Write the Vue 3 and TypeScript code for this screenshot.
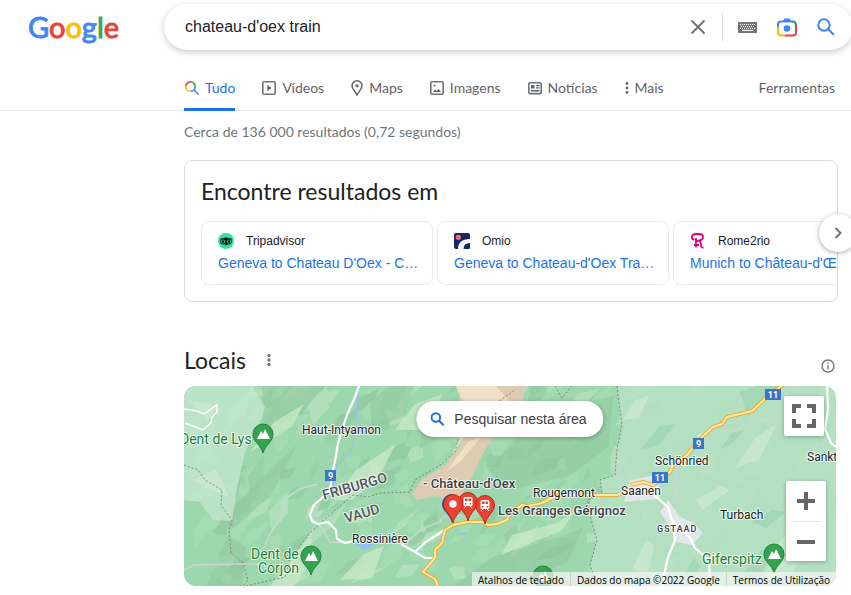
<script setup lang="ts">
import { ref } from 'vue'

interface Facet { points: string; fill: string }
interface Label { text: string; x: number; y: number; kind: string; rotate?: number }

const query = ref("chateau-d'oex train")

const logo = [
  { ch: 'G', tone: 'blue' }, { ch: 'o', tone: 'red' }, { ch: 'o', tone: 'yellow' },
  { ch: 'g', tone: 'blue' }, { ch: 'l', tone: 'green' }, { ch: 'e', tone: 'red' },
]

const tabs = [
  { id: 'all', label: 'Tudo' }, { id: 'videos', label: 'Vídeos' }, { id: 'maps', label: 'Maps' },
  { id: 'images', label: 'Imagens' }, { id: 'news', label: 'Notícias' }, { id: 'more', label: 'Mais' },
]

const sources = [
  { id: 'tripadvisor', name: 'Tripadvisor', title: "Geneva to Chateau D'Oex - C…" },
  { id: 'omio', name: 'Omio', title: "Geneva to Chateau-d'Oex Tra…" },
  { id: 'rome2rio', name: 'Rome2rio', title: "Munich to Château-d'Œx" },
]

/* Relief shading: slanted facets from a fixed-seed generator, so it is the same on each load. */
function makeFacets(seed: number, count: number, fills: string[]): Facet[] {
  let s = seed
  const next = () => {
    s = (s * 16807) % 2147483647
    return s / 2147483647
  }
  return Array.from({ length: count }, () => {
    const x = 184 + next() * 652
    const y = 386 + next() * 200
    const l = 12 + next() * 34
    const w = 5 + next() * 12
    const a = -0.4 - next() * 0.9
    const dx = Math.cos(a)
    const dy = Math.sin(a)
    const pts = [
      [x, y],
      [x + dx * l * 0.5 - dy * w * 0.6, y + dy * l * 0.5 + dx * w * 0.6],
      [x + dx * l, y + dy * l],
      [x + dx * l * 0.4 + dy * w * 0.7, y + dy * l * 0.4 - dx * w * 0.7],
    ]
    return {
      points: pts.map(p => p.map(v => Math.round(v)).join(',')).join(' '),
      fill: fills[Math.floor(next() * fills.length)],
    }
  })
}
const facets = makeFacets(7321, 330, ['#8cc49b', '#aadfb8', '#aadfb8', '#c8e8c9', '#93cba3'])

const labels: Label[] = [
  { text: 'Haut-Intyamon', x: 302, y: 434, kind: 'town' },
  { text: 'Rossinière', x: 352, y: 543, kind: 'town' },
  { text: '- Château-d\'Oex', x: 423, y: 488, kind: 'place' },
  { text: 'Les Granges Gérignoz', x: 498, y: 515, kind: 'place' },
  { text: 'Rougemont', x: 533, y: 497, kind: 'town' },
  { text: 'Saanen', x: 621, y: 495, kind: 'town' },
  { text: 'Schönried', x: 655, y: 465, kind: 'town' },
  { text: 'Turbach', x: 720, y: 519, kind: 'town' },
  { text: 'Sankt', x: 807, y: 461, kind: 'town' },
  { text: 'GSTAAD', x: 657, y: 532, kind: 'district' },
  { text: 'Dent de Lys', x: 180, y: 444, kind: 'peak' },
  { text: 'Dent de', x: 251, y: 559, kind: 'peak' },
  { text: 'Corjon', x: 258, y: 573, kind: 'peak' },
  { text: 'Giferspitz', x: 702, y: 564, kind: 'peak' },
  { text: 'FRIBURGO', x: 324, y: 500, kind: 'canton', rotate: -16 },
  { text: 'VAUD', x: 346, y: 523, kind: 'canton', rotate: -16 },
]

const peaks = [{ x: 263, y: 434 }, { x: 311, y: 556 }, { x: 774, y: 554 }, { x: 543, y: 576 }]
const shields = [
  { n: '9', x: 325, y: 470, w: 11 }, { n: '9', x: 693, y: 438, w: 11 },
  { n: '11', x: 652, y: 472, w: 16 }, { n: '11', x: 765, y: 389, w: 16 },
]
const road = 'M438 586L435 579L423 572L435 558L435 550L442 543L445 530L453 525L467 522L482 522L488 525L497 524L507 520L510 513L522 505L528 506L542 503L550 499L560 495L617 495L630 490M630 485L643 482L653 485L670 472L673 465L687 455L702 437L713 427L722 424L727 417L752 411L767 397L784 384'
</script>

<template>
  <div class="page">
    <header class="top">
      <a class="logo" href="#" aria-label="Google"><span v-for="(l, i) in logo" :key="i" :class="l.tone">{{ l.ch }}</span></a>
      <form class="search" role="search" @submit.prevent>
        <input v-model="query" class="query" type="text" aria-label="Pesquisar" />
        <button class="tool clear" type="button" aria-label="Limpar" @click="query = ''">
          <svg width="20" height="20" viewBox="0 0 20 20"><path d="M3.5 3.5l13 13m0-13l-13 13" fill="none" stroke="#70757a" stroke-width="2" /></svg>
        </button>
        <button class="tool" type="button" aria-label="Teclado">
          <svg width="19" height="12" viewBox="0 0 19 12">
            <rect width="19" height="11" x="0" y="1" fill="#757575" />
            <path d="M2 3.500h15M3 5.500h14M2 7.500h15" stroke="#fff" stroke-width="1" stroke-dasharray="1 1" />
            <path d="M4 9.500h11" stroke="#fff" stroke-width="1" />
          </svg>
        </button>
        <button class="tool" type="button" aria-label="Pesquisar por imagem">
          <svg width="20" height="19" viewBox="0 0 20 19" fill="none" stroke-width="2">
            <path d="M1 9V6.500Q1 3.500 4 3.500H16" stroke="#4285f4" />
            <path d="M6 3l1.500-2.500h5L14 3z" fill="#4285f4" />
            <path d="M15 3.500h1Q19 3.500 19 7" stroke="#34a853" />
            <path d="M19 7v7.500Q19 17.500 16 17.500H8" stroke="#ea4335" />
            <path d="M1 9v5.500Q1 17.500 4 17.500H8" stroke="#fbbc04" />
            <circle cx="10" cy="10.500" r="3.300" fill="#4285f4" />
          </svg>
        </button>
        <button class="tool" type="submit" aria-label="Pesquisar">
          <svg width="18" height="18" viewBox="0 0 18 18" fill="none" stroke="#4285f4" stroke-width="2"><circle cx="7" cy="7" r="5.700" /><path d="M11 11l6 6" /></svg>
        </button>
      </form>
    </header>

    <nav class="tabs">
      <a v-for="t in tabs" :key="t.id" href="#" class="tab" :class="[t.id, { active: t.id === 'all' }]">
        <svg v-if="t.id === 'all'" class="ic" viewBox="0 0 16 16" fill="none" stroke-width="1.600">
          <path d="M1.800 6.500A4.700 4.700 0 0 1 8.500 2.200" stroke="#ea4335" />
          <path d="M8.500 2.200A4.700 4.700 0 0 1 11.200 6.500" stroke="#34a853" />
          <path d="M11.200 6.500A4.700 4.700 0 0 1 6.500 11.200M9.800 9.800l4.700 4.700" stroke="#4285f4" />
          <path d="M6.500 11.200A4.700 4.700 0 0 1 1.800 6.500" stroke="#fbbc04" />
        </svg>
        <svg v-else-if="t.id === 'videos'" class="ic" viewBox="0 0 16 16"><rect x="1.800" y="1.800" width="12.400" height="12.400" rx="1" fill="none" stroke="#70757a" stroke-width="1.600" /><path d="M6.300 5v6l4.200-3z" fill="#5f6368" /></svg>
        <svg v-else-if="t.id === 'maps'" class="ic pin" viewBox="0 0 14 16"><path d="M7 15C5.500 11.500 2 9.500 2 5.800a5 5 0 0 1 10 0C12 9.500 8.500 11.500 7 15z" fill="none" stroke="#5f6368" stroke-width="1.500" /><circle cx="7" cy="5.800" r="1.500" fill="#5f6368" /></svg>
        <svg v-else-if="t.id === 'images'" class="ic" viewBox="0 0 16 16"><rect x="1.800" y="1.800" width="12.400" height="12.400" rx="1" fill="none" stroke="#70757a" stroke-width="1.600" /><path d="M4 12l1.800-2.500 1.700 1.400 2.300-2L12 12z" fill="#5f6368" /><circle cx="5.500" cy="5.500" r="1" fill="#5f6368" /></svg>
        <svg v-else-if="t.id === 'news'" class="ic" viewBox="0 0 16 16"><rect x="1.800" y="2.800" width="12.400" height="10.800" rx="1" fill="none" stroke="#70757a" stroke-width="1.600" /><path d="M4 5h3.500v3.500H4zM9 5h3.500v1.300H9zM9 7.300h3.500v1.300H9zM4 10h8.500v1.400H4z" fill="#5f6368" /></svg>
        <svg v-else class="ic dots" viewBox="0 0 6 16" fill="#5f6368"><circle cx="3" cy="3.500" r="1.400" /><circle cx="3" cy="8" r="1.400" /><circle cx="3" cy="12.500" r="1.400" /></svg>
        <span>{{ t.label }}</span>
      </a>
      <a href="#" class="tab tools">Ferramentas</a>
    </nav>

    <main class="main">
      <p class="stats">Cerca de 136 000 resultados (0,72 segundos)</p>

      <section class="find">
        <h2>Encontre resultados em</h2>
        <div class="rail">
          <a v-for="s in sources" :key="s.id" href="#" class="card">
            <span class="site">
              <svg v-if="s.id === 'tripadvisor'" width="16" height="16" viewBox="0 0 16 16">
                <circle cx="8" cy="8" r="8" fill="#34e0a1" />
                <path d="M2 5.500h2.500Q8 3.500 11.500 5.500H14L13 7v2L8 12.500 3 9V7z" fill="#0b1f17" />
                <circle cx="5" cy="8.500" r="2.500" fill="#34e0a1" stroke="#0b1f17" /><circle cx="11" cy="8.500" r="2.500" fill="#34e0a1" stroke="#0b1f17" />
                <circle cx="5" cy="8.500" r="1.200" /><circle cx="11" cy="8.500" r="1.200" />
              </svg>
              <svg v-else-if="s.id === 'omio'" width="16" height="16" viewBox="0 0 16 16">
                <rect width="16" height="16" rx="2" fill="#132968" /><circle cx="4.300" cy="4.300" r="2.600" fill="#fa6b6b" />
                <path d="M4 16Q4 6 16 6V10Q9.500 10 9.500 16z" fill="#fff" /><path d="M10 16q0-4 6-4v3l-1 1z" fill="#132968" />
              </svg>
              <svg v-else width="16" height="16" viewBox="0 0 16 16" fill="none" stroke="#de007b" stroke-width="1.800">
                <path d="M4.500 6.500Q1.500 6.500 1.800 4Q2.200 1 6.500 1h2.500q4 0 4 3t-4 3.500L5.500 9M6 5v9.500M9.500 8q1.500 1 1.500 4t2.500 2.500M4 12h5" />
              </svg>
              <span>{{ s.name }}</span>
            </span>
            <span class="title">{{ s.title }}</span>
          </a>
        </div>
        <button class="next" type="button" aria-label="Seguinte"><svg width="16" height="16" viewBox="0 0 16 16"><path d="M5.500 3l5 5-5 5" fill="none" stroke="#70757a" stroke-width="2" /></svg></button>
      </section>

      <section class="places">
        <div class="head">
          <h2>Locais</h2>
          <button class="bare" type="button" aria-label="Mais opções"><svg width="6" height="16" viewBox="0 0 6 16" fill="#70757a"><circle cx="3" cy="3.500" r="1.700" /><circle cx="3" cy="8" r="1.700" /><circle cx="3" cy="12.500" r="1.700" /></svg></button>
          <button class="bare info" type="button" aria-label="Informações"><svg width="16" height="16" viewBox="0 0 16 16" fill="none" stroke="#70757a" stroke-width="1.400"><circle cx="8" cy="8" r="6" /><path d="M8 7.200v4M8 4.600v1.400" /></svg></button>
        </div>

        <div class="map">
          <svg class="canvas" viewBox="184 386 652 200" preserveAspectRatio="xMidYMid slice">
            <rect x="184" y="386" width="652" height="200" fill="#9dd7ad" />
            <g opacity=".5"><polygon v-for="(f, i) in facets" :key="i" :points="f.points" :fill="f.fill" /></g>
            <g fill="#8fc69e" opacity=".55">
              <path d="M262 386h60l-18 26-40 22zM247 493l30-30 20-18-26 50-38 34-8-12zM206 586l22-50 18 10-4 40zM370 400l20-14h24l-10 30-32 14zM488 470l40-44 40-20 45-10-4 50-40 30-60 14zM454 586l40-30 70-20 20-10-16 36-60 24z" />
            </g>
            <g fill="#cbe9c9" opacity=".75">
              <path d="M250 452l24-30 30-18-12 22-28 18zM334 500l22-30 40-26-18 34-26 22zM395 430l20-26 28-10-20 36zM270 586l24-30 18-26-2 34-16 22zM340 580l24-26 20-8-12 32zM512 535l45-12 20-14-16 22-60 24zM505 420l30-18 10 4-30 30z" />
            </g>
            <path d="M184 386h68l13 21-5 15-15 30-8 36-5 33-19-1-13-18-16-2z" fill="#c3e7cd" opacity=".8" />
            <path d="M617 386l3 24 2 15-5 25-2 25-15 5 2 13-12 7v15l7 25-7 25 8 21h238V386z" fill="#b9e2c6" opacity=".85" />
            <g fill="#cbe9cd" opacity=".8"><path d="M735 468l20-30 22-14-18 36zM760 586l20-45 28-30-14 60zM623 420l12-20 14-4-10 22zM632 570l14-30 8 6-6 28zM696 500l24-14 10 4-28 20zM188 400l30 6-10 14zM192 480l24-10 14 28z" /></g>
            <g fill="#9fd4b1" opacity=".75"><path d="M720 450l12-17 12-3-10 12zM752 522l20-12 14 2-20 16zM640 450l20-24 16-2-18 22zM740 392l18-6h20l-30 30zM735 584l26-34 12 2-18 34zM680 582l14-24 6 8-8 20z" /></g>
            <path d="M456 386h69l-5 24-22 22-14 19-12 26-12 20-12 2-12-3-19 4-5-6 9-14 24-15 16-19 6-22z" fill="#dfcbb1" />
            <path d="M456 386h40l14 16-28 10-16 22-14 22-22 14 20-12 12-24 6-22zM468 442l14-6-22 26-14 10z" fill="#efe0c8" />
            <path d="M660 512l8-12 12 17 12 5 11 11-11 12-15-3-7-15zM630 480l22-4 10 15-4 8-34 3zM697 436l11-6-5 12z" fill="#e3e7e9" />
            <path d="M357 388l-1 40-5 24-14 13-3 20M350 448l-10 10" stroke="#9bbdf3" stroke-width="1" fill="none" />
            <path d="M354 543l11-2 10 4-11 5zM457 534l10-2-3 3zM330 482l5-8v16z" fill="#99bdf6" />
            <g fill="none" stroke="#777" stroke-width="1" stroke-dasharray="2 2" opacity=".85">
              <path d="M184 465l14 5 7 10 17 10-1 15 11 15-3 10 2 23 12 10 5 17-5 6M246 586l39-9 5-17 20-27 25-23 10-8 8-7 15 2 12-4 30-1 5-12 25-15 15-13 6-23 55-40M555 386l7 12 10-12M617 386l3 24 2 15-5 25-2 25-15 5 2 13-14 7 2 15 7 25-7 25 8 21" />
            </g>
            <g fill="none" stroke="#c9d8d0" stroke-width="1.500"><path d="M184 570l10-5 45-1h24M263 550l7-16 12-18 4-18 14-9 17-5M310 516l12 12 8 14 20 1M440 520l5-4 18-1M711 430l20 2 18-9 18-4 16-16 16-17M677 468l-3 18 4 14M393 543l17-4 12-10 20-8" /></g>
            <g fill="none" stroke="#fff" stroke-width="2.200">
              <path d="M359 386l-4 11-8 18-3 9-6 19-2 13-3 14-3 20-8 8-8 7-4 9 2 7 6 3 10-2 8 8 1 9 8 4 12-3M401 544l14 8 10 6h10M415 552l12-11 13-8 5-4M653 494l15 13 4 13 3 20-7 17-4 18-2 11M672 520l18 18 5 10 14 12 1 26M827 386l1 23-3 20 6 14 5 4" />
              <path d="M184 409l13 2 7 3 13-9v7l-5 5-1 6-8 7-18-7" stroke-width="1.500" />
            </g>
            <path :d="road" fill="none" stroke="#e7ae3a" stroke-width="4" stroke-linejoin="round" />
            <path :d="road" fill="none" stroke="#fce8a6" stroke-width="2" stroke-linejoin="round" />

            <g v-for="(s, i) in shields" :key="'s' + i">
              <rect :x="s.x" :y="s.y" :width="s.w" height="11" fill="#3a75c8" />
              <text class="shield" :x="s.x + s.w / 2" :y="s.y + 9" text-anchor="middle">{{ s.n }}</text>
            </g>
            <g v-for="(p, i) in peaks" :key="'p' + i" :transform="`translate(${p.x} ${p.y})`">
              <path d="M0 19C-2 11-10 8-10 0a10 10 0 0 1 20 0C10 8 2 11 0 19z" fill="#34a351" stroke="#23823b" />
              <path d="M-6 5l4-8 2 3 2-5 5 10z" fill="#fff" />
            </g>
            <text v-for="l in labels" :key="l.text" :class="l.kind" :x="l.x" :y="l.y" :transform="l.rotate ? `rotate(${l.rotate} ${l.x} ${l.y})` : undefined">{{ l.text }}</text>

            <g v-for="x in [468, 485]" :key="x" :transform="`translate(${x} ${x === 485 ? 505 : 502})`">
              <path d="M0 19C-2 10-9.500 7-9.500 0a9.500 9.500 0 0 1 19 0C9.500 7 2 10 0 19z" fill="#ea4335" stroke="#b5261d" />
              <rect x="-4.500" y="-5" width="9" height="9" rx="1.500" fill="#fff" /><path d="M-3-3.500h2.500v2.500H-3zM.5-3.500H3v2.500H.5zM-3 1h1.500v1.500H-3zM1.500 1H3v1.500H1.500z" fill="#ea4335" />
              <path d="M-4 6l2-2M4 6l-2-2" stroke="#fff" />
            </g>
            <g transform="translate(453 504)">
              <path d="M-1 19C-3 10-11 7-11 0a10 10 0 0 1 10-10z" fill="#28439a" />
              <path d="M0 19C-2 10-9.500 7-9.500 0a9.500 9.500 0 0 1 19 0C9.500 7 2 10 0 19z" fill="#ea4335" stroke="#b5261d" />
              <circle r="3.700" fill="#fff" />
            </g>
          </svg>

          <button class="area" type="button">
            <svg width="14" height="14" viewBox="0 0 14 14" fill="none" stroke="#1a73e8" stroke-width="2"><circle cx="5.500" cy="5.500" r="4.300" /><path d="M8.700 8.700l4.600 4.600" /></svg>
            <span>Pesquisar nesta área</span>
          </button>
          <button class="ctl full" type="button" aria-label="Ecrã inteiro"><svg width="24" height="24" viewBox="0 0 24 24" fill="none" stroke="#666" stroke-width="4"><path d="M2 9V2h7M15 2h7v7M22 15v7h-7M9 22H2v-7" /></svg></button>
          <div class="ctl zoom">
            <button type="button" aria-label="Aumentar"><svg width="18" height="18" viewBox="0 0 18 18"><path d="M0 9h18M9 0v18" stroke="#666" stroke-width="4" /></svg></button>
            <button type="button" aria-label="Diminuir"><svg width="18" height="18" viewBox="0 0 18 18"><path d="M0 9h18" stroke="#666" stroke-width="4" /></svg></button>
          </div>
          <div class="credits">
            <a href="#">Atalhos de teclado</a><span>Dados do mapa ©2022 Google</span><a href="#">Termos de Utilização</a>
          </div>
        </div>
      </section>
    </main>
  </div>
</template>

<style>
body { background: #fff; overflow: hidden; }
</style>

<style scoped>
.page { font-family: "Liberation Sans", Arial, sans-serif; color: #202124; }
button { border: 0; padding: 0; background: none; cursor: pointer; display: flex; align-items: center; justify-content: center; }
svg { display: block; flex: none; }
a { text-decoration: none; color: inherit; }
h2 { margin: 0; font: 400 23px/28px Lato, sans-serif; }

.top { display: flex; align-items: center; padding: 4px 0 0 28px; margin-right: -2px; }
.logo { width: 136px; flex: none; font: 400 29px/46px Lato, sans-serif; -webkit-text-stroke: 1px currentColor; }
.blue { color: #4285f4; } .red { color: #ea4335; } .yellow { color: #fbbc05; } .green { color: #34a853; }
.search { flex: 1; min-width: 0; height: 46px; display: flex; align-items: center; gap: 20px; padding: 0 18px 0 21px; box-sizing: border-box; border-radius: 24px; background: #fff; box-shadow: 0 2px 6px rgba(32, 33, 36, .24); }
.query { flex: 1; min-width: 0; border: 0; outline: 0; padding: 0; background: none; font: 16px "Liberation Sans", Arial, sans-serif; color: #202124; }
.clear { border-right: 1px solid #dadce0; padding: 4px 14px 4px 0; margin-right: -5px; }

.tabs { display: flex; gap: 26px; padding: 16px 16px 0 184px; border-bottom: 1px solid #ebebeb; font: 400 14px/20px Lato, sans-serif; color: #5f6368; }
.tab { display: flex; align-items: center; gap: 5px; height: 44px; box-sizing: border-box; padding-top: 2px; border-bottom: 3px solid transparent; white-space: nowrap; }
.tab.active { color: #1a73e8; border-color: #1a73e8; margin-bottom: -1px; height: 45px; }
.ic { width: 16px; height: 16px; }
.ic.pin { width: 14px; } .ic.dots { width: 6px; }
.tools { margin-left: auto; }

.main { padding: 0 13px 0 184px; }
.stats { margin: 0; padding: 11px 0 18px; font: 400 14px/20px Lato, sans-serif; color: #70757a; }
.find { position: relative; border: 1px solid #dadce0; border-radius: 8px; padding: 16px 0 16px 16px; }
.rail { display: flex; gap: 4px; margin-top: 16px; overflow: hidden; }
.card { flex: none; width: 232px; height: 64px; box-sizing: border-box; border: 1px solid #ebebeb; border-radius: 8px; padding: 11px 0 0 16px; }
.site { display: flex; align-items: center; gap: 12px; font-size: 12px; line-height: 16px; }
.title { display: block; margin-top: 4px; font-size: 14px; line-height: 20px; color: #1a73e8; white-space: nowrap; }
.next { position: absolute; right: -20px; top: 53px; width: 38px; height: 38px; border-radius: 50%; background: #fff; box-shadow: 0 1px 5px rgba(0, 0, 0, .35); }

.places { margin: 44px 2px 0 0; }
.head { display: flex; align-items: center; gap: 20px; height: 28px; margin-bottom: 12px; }
.info { margin: 12px 0 0 auto; }
.map { position: relative; height: 200px; border-radius: 12px; overflow: hidden; }
.canvas { width: 100%; height: 200px; }
text { font-family: Roboto, sans-serif; font-size: 12px; fill: #202124; stroke: #fff; stroke-width: 2px; stroke-opacity: .8; paint-order: stroke; stroke-linejoin: round; }
.place { font-size: 13px; fill: #3c4043; font-weight: 500; }
.peak { font-size: 14px; fill: #188038; }
.canton { font-size: 14px; font-weight: 500; fill: #50565b; }
.district { font-size: 9px; font-weight: 500; letter-spacing: 1px; fill: #3c4043; }
.shield { font-size: 9px; font-weight: 700; fill: #fff; stroke: none; }

.area { position: absolute; top: 15px; left: 50%; transform: translateX(-50%); height: 36px; padding: 0 17px 0 14px; gap: 10px; border-radius: 18px; background: #fff; box-shadow: 0 1px 4px rgba(0, 0, 0, .3); font: 14px "Liberation Sans", Arial, sans-serif; color: #3c4043; white-space: nowrap; }
.ctl { position: absolute; width: 40px; background: #fff; border-radius: 2px; box-shadow: 0 1px 4px rgba(0, 0, 0, .3); }
.full { top: 10px; right: 12px; height: 40px; }
.zoom { top: 95px; right: 10px; }
.zoom button { width: 30px; height: 40px; margin: 0 5px; }
.zoom button + button { border-top: 1px solid #e6e6e6; }
.credits { position: absolute; right: 0; bottom: 0; display: flex; height: 14px; background: rgba(245, 245, 245, .72); font: 10px/16px "Open Sans", sans-serif; color: #000; white-space: nowrap; }
.credits > * { padding: 0 6px; }
.credits > * + * { border-left: 1px solid #c5d5cc; }
</style>
